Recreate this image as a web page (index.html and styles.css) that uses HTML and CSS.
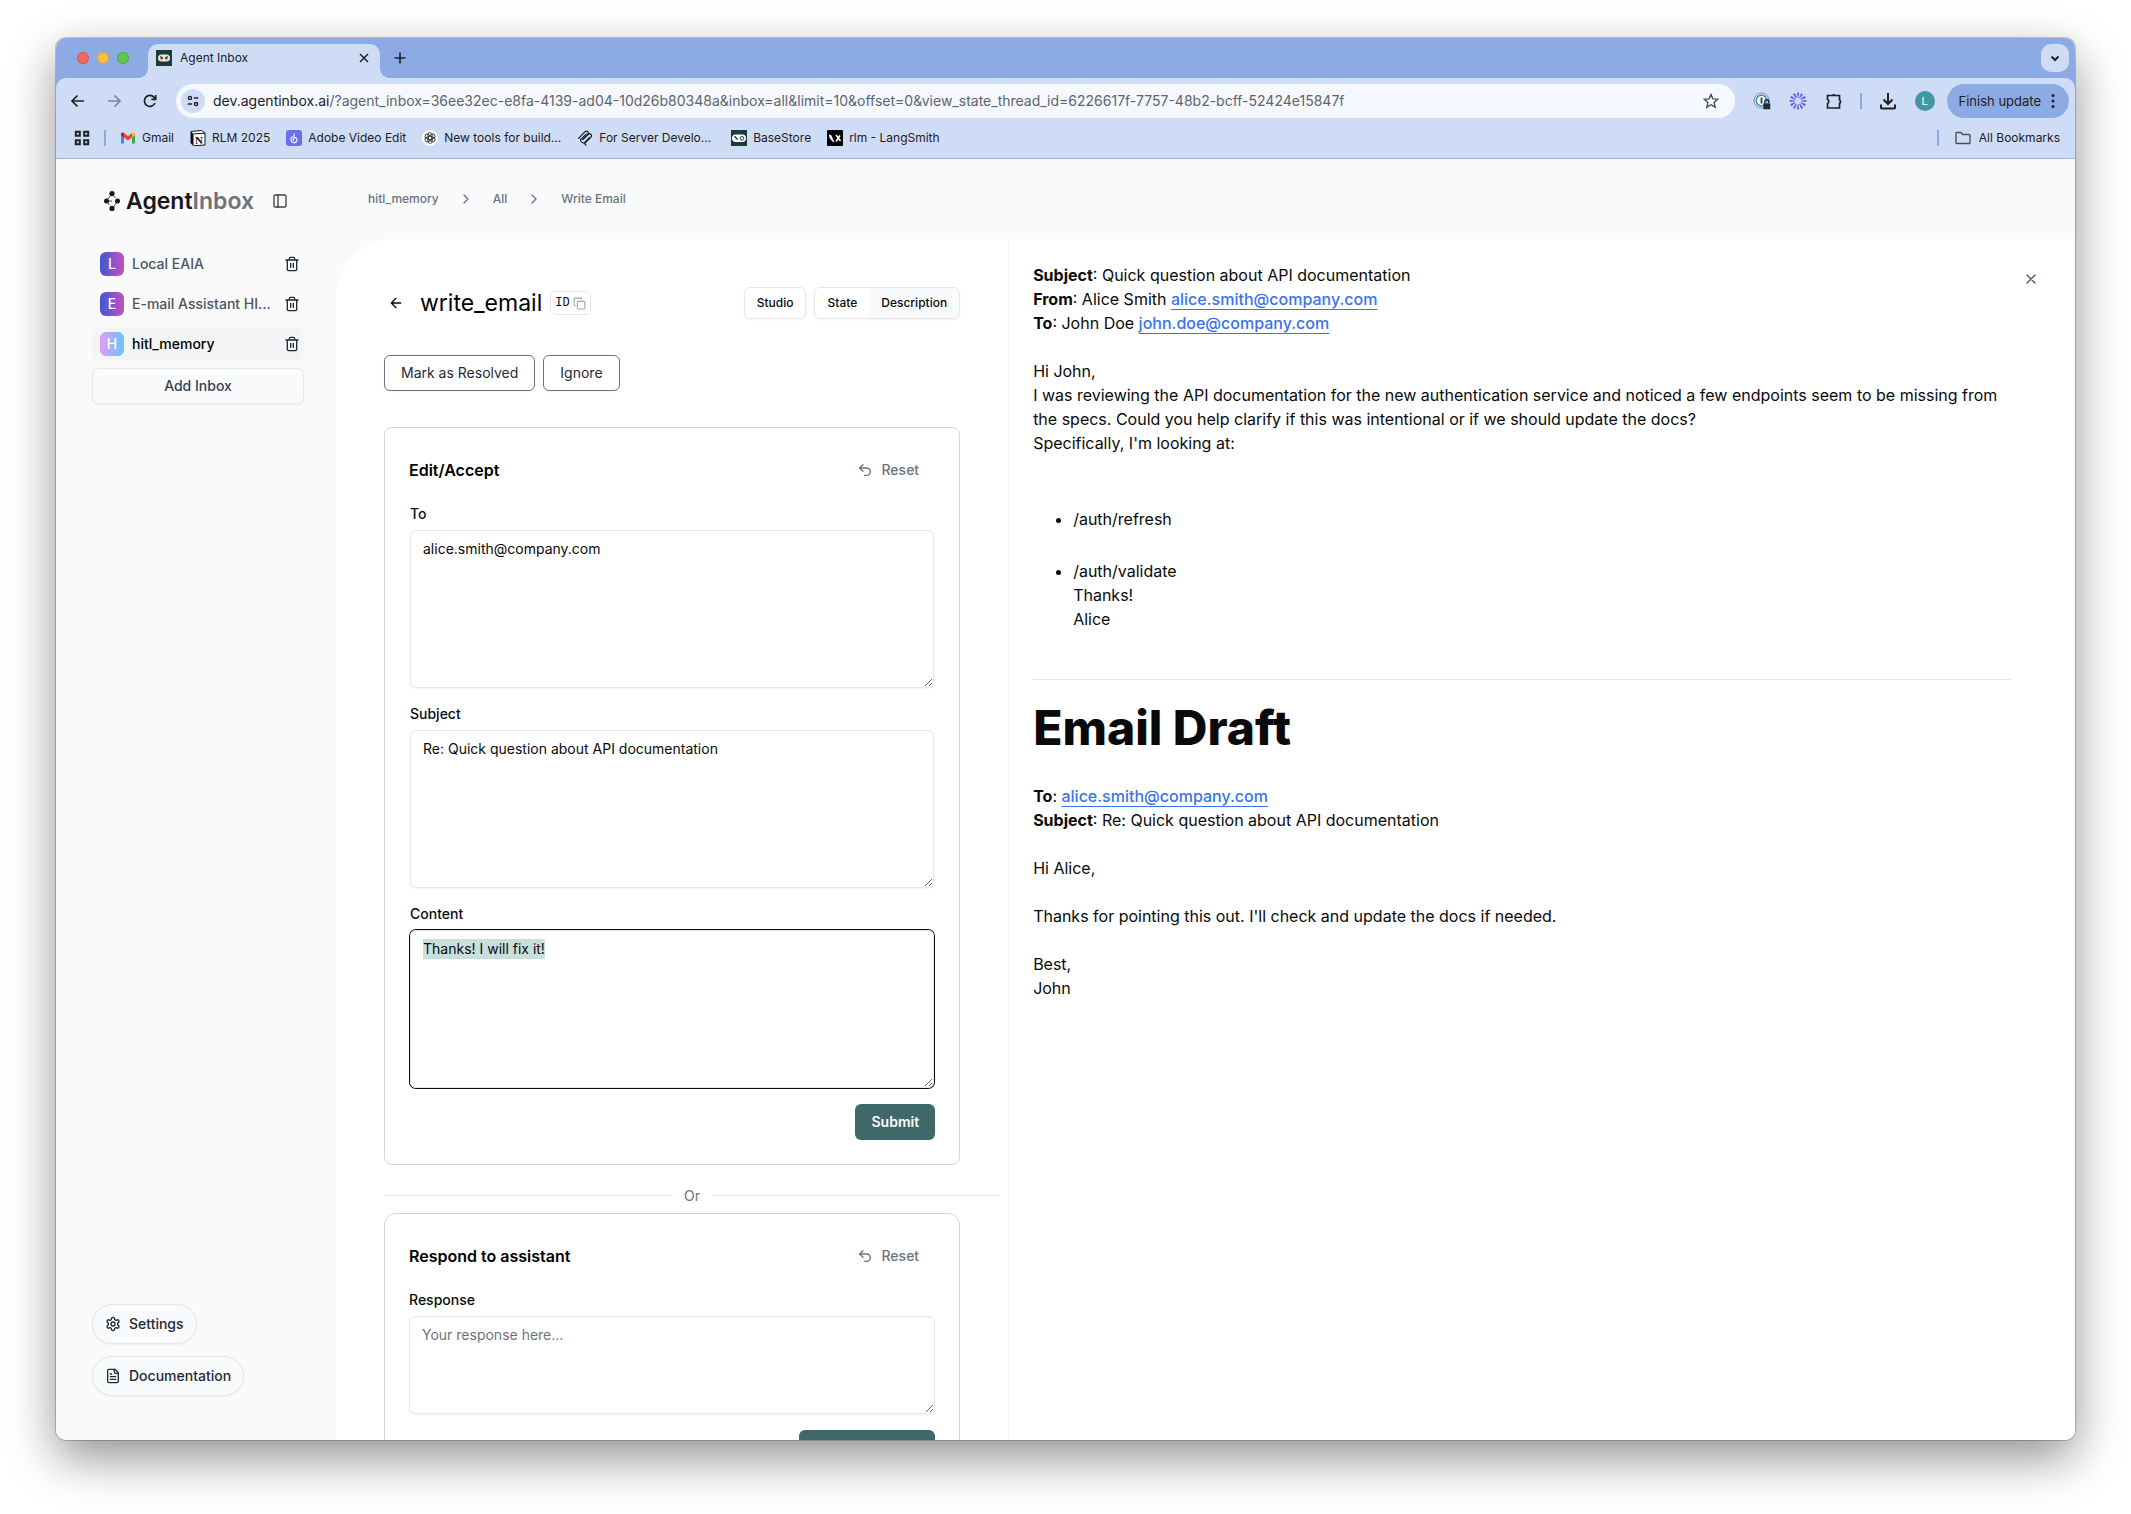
FILE: index.html
```html
<!DOCTYPE html>
<html lang="en">
<head>
<meta charset="utf-8">
<meta name="viewport" content="width=device-width, initial-scale=1">
<title>Agent Inbox</title>
<link rel="stylesheet" href="styles.css">
</head>
<body>
<svg class="defs" aria-hidden="true">
  <symbol id="trash" viewBox="0 0 24 24"><path d="M3 6h18M19 6v14c0 1-1 2-2 2H7c-1 0-2-1-2-2V6M8 6V4c0-1 1-2 2-2h4c1 0 2 1 2 2v2M10 11v6M14 11v6"/></symbol>
  <symbol id="chevron-right" viewBox="0 0 24 24"><path d="m9 18 6-6-6-6"/></symbol>
  <symbol id="undo" viewBox="0 0 24 24"><path d="M9 14 4 9l5-5"/><path d="M4 9h10.500a5.500 5.500 0 0 1 0 11H11"/></symbol>
  <symbol id="arrow-left" viewBox="0 0 24 24"><path d="m12 19-7-7 7-7M19 12H5"/></symbol>
  <symbol id="robot" viewBox="0 0 16 16"><rect width="16" height="16" fill="#1c3c3c"/><rect x="2" y="4.500" width="12" height="7" rx="3.500" fill="#f6e3d3"/><path d="M4.200 6.500 7 8.200M11.800 6.500 9 8.200" stroke="#1c3c3c" stroke-width="1.200"/><circle cx="5.500" cy="8.500" r="1" fill="#1c3c3c"/><circle cx="10.500" cy="8.500" r="1" fill="#1c3c3c"/></symbol>
</svg>

<div class="window">
  <header class="tabstrip">
    <div class="lights"><span class="light red"></span><span class="light amber"></span><span class="light green"></span></div>
    <div class="tab">
      <svg class="fav" aria-hidden="true"><use href="#robot"/></svg>
      <span class="tab-title">Agent Inbox</span>
      <button class="plain" aria-label="Close tab"><svg class="i16" viewBox="0 0 16 16"><path d="m4 4 8 8M12 4l-8 8"/></svg></button>
    </div>
    <button class="plain new-tab" aria-label="New tab"><svg class="i16" viewBox="0 0 16 16"><path d="M8 2.500v11M2.500 8h11"/></svg></button>
    <button class="tab-search" aria-label="Search tabs"><svg class="i16" viewBox="0 0 16 16"><path d="m4.500 6.500 3.500 3.500 3.500-3.500"/></svg></button>
  </header>

  <div class="chrome">
    <div class="toolbar">
      <div class="nav-buttons">
        <button class="plain" aria-label="Back"><svg class="i16" viewBox="0 0 16 16"><path d="M14 8H2.500M7.500 2.500 2 8l5.500 5.500"/></svg></button>
        <button class="plain dim" aria-label="Forward"><svg class="i16" viewBox="0 0 16 16"><path d="M2 8h11.500M8.500 2.500 14 8l-5.500 5.500"/></svg></button>
        <button class="plain" aria-label="Reload"><svg class="i16" viewBox="0 0 16 16"><path d="M13 10A5.500 5.500 0 1 1 12 4.200L13.500 6"/><path d="M13.700 2v4.300H9.400"/></svg></button>
      </div>
      <div class="omnibox">
        <button class="site-info" aria-label="Site information"><svg class="i16" viewBox="0 0 16 16"><circle cx="4.500" cy="4.500" r="1.800"/><path d="M9 4.500h5M2 11.500h5"/><circle cx="11.500" cy="11.500" r="1.800"/></svg></button>
        <div class="url" role="textbox" aria-label="Address" tabindex="0"><span class="host">dev.agentinbox.ai</span>/?agent_inbox=36ee32ec-e8fa-4139-ad04-10d26b80348a&amp;inbox=all&amp;limit=10&amp;offset=0&amp;view_state_thread_id=6226617f-7757-48b2-bcff-52424e15847f</div>
        <button class="plain star" aria-label="Bookmark"><svg class="i16" viewBox="0 0 16 16"><path d="m8 1.500 1.900 4.400 4.800.4-3.600 3.200 1.100 4.700L8 11.700l-4.200 2.500 1.100-4.700L1.300 6.300l4.800-.4z"/></svg></button>
      </div>
      <div class="extensions">
        <button class="plain" aria-label="Password manager"><svg class="i18" viewBox="0 0 18 18"><circle cx="8.500" cy="8.500" r="7.500" fill="#fff" stroke="#7d8591" stroke-width="1"/><circle cx="8.500" cy="8.500" r="5.400" stroke="#3d8bea" stroke-width="1.600"/><path d="M8.500 5.500v6" stroke="#33404f" stroke-width="1.800"/><rect x="10" y="11" width="7.500" height="6.500" rx="1" fill="#1f2937" stroke="#cfdcf6" stroke-width=".5"/><path d="M11.800 11V9.800a2 2 0 0 1 4 0V11" stroke="#1f2937" stroke-width="1.400"/></svg></button>
        <button class="plain" aria-label="Extension"><svg class="i18" viewBox="0 0 18 18"><circle cx="9" cy="9" r="5.800" pathLength="24" stroke="#6a5cf0" stroke-width="5.200" stroke-dasharray="1.100 .900" stroke-dashoffset=".550"/></svg></button>
        <button class="plain" aria-label="Extensions"><svg class="i18" viewBox="0 0 18 18"><path d="M2.500 3.500h12V8a2 2 0 0 1 0 3.500V16h-12v-4.500a2.200 2.200 0 0 0 0-4z" stroke-width="1.700"/><path d="M7 3.200a2 2 0 0 1 3.600 0zM15 7.800a2 2 0 0 1 0 3.600z" fill="#1f2024" stroke="none"/></svg></button>
        <span class="divider"></span>
        <button class="plain" aria-label="Downloads"><svg class="i18" viewBox="0 0 18 18"><path d="M9 1v10.500M4.500 7.500 9 12l4.500-4.500M2 12.500v3.200c0 .5.300.8.800.8h12.400c.5 0 .8-.3.800-.8v-3.200" stroke-width="2"/></svg></button>
        <button class="profile" aria-label="Profile">L</button>
      </div>
      <button class="update">Finish update<svg class="dots" viewBox="0 0 4 16" aria-hidden="true"><circle cx="2" cy="2.500" r="1.500"/><circle cx="2" cy="8" r="1.500"/><circle cx="2" cy="13.500" r="1.500"/></svg></button>
    </div>

    <nav class="bookmarks" aria-label="Bookmarks">
      <button class="plain" aria-label="Apps"><svg class="i16" viewBox="0 0 16 16"><path d="M1.800 1.800h4v4h-4zM10.200 1.800h4v4h-4zM1.800 10.200h4v4h-4zM10.200 10.200h4v4h-4z"/></svg></button>
      <span class="divider"></span>
      <a class="mark" href="#"><svg class="fav" viewBox="0 0 16 16"><path d="M1 13.500V4.200l3 2.300v7z" fill="#4285f4"/><path d="M15 13.500V4.200l-3 2.300v7z" fill="#34a853"/><path d="M1 4.500C1 2.500 3 2 4 3l4 3.200L12 3v4.300l-4 3.200-7-5.300z" fill="#ea4335"/><path d="M12 3c1-1 3-.5 3 1.500v.8l-3 2.400z" fill="#fbbc04"/><path d="M1 4.500C1 3.500 1.500 2.800 2.300 2.600L4 4v3.600L1 5.400z" fill="#c5221f"/></svg>Gmail</a>
      <a class="mark" href="#"><svg class="fav" viewBox="0 0 16 16"><path d="m1 1.500 10.500-1L15 3v12l-11.500.8L1 13z" fill="#fff" stroke="#111"/><path d="M1 1.500 3.500 4v11.500L1 13z" fill="#111"/><path d="M3.500 3.900 15 3.200" stroke="#111"/><text x="5" y="13.500" class="notion">N</text></svg>RLM 2025</a>
      <a class="mark" href="#"><svg class="fav" viewBox="0 0 16 16"><rect width="16" height="16" rx="3" fill="#6a6ff0"/><path d="M8 3.500c1 1.500-1 2.500 0 4M6.500 6.500C5 7.500 4.800 9 5 10c.3 1.800 1.600 2.800 3 2.800s3-1.200 3-3c0-2-2-2.800-3.500-1.500-1 1-.5 2.500.8 2.500" fill="none" stroke="#fff" stroke-width="1.100"/></svg>Adobe Video Edit</a>
      <a class="mark" href="#"><svg class="fav" viewBox="0 0 16 16"><circle cx="8" cy="8" r="8" fill="#fff"/><g fill="none" stroke="#444" stroke-width=".9"><rect x="5.800" y="2.600" width="4.400" height="7.200" rx="2.200"/><rect x="5.800" y="2.600" width="4.400" height="7.200" rx="2.200" transform="rotate(60 8 8)"/><rect x="5.800" y="2.600" width="4.400" height="7.200" rx="2.200" transform="rotate(120 8 8)"/><rect x="5.800" y="2.600" width="4.400" height="7.200" rx="2.200" transform="rotate(180 8 8)"/><rect x="5.800" y="2.600" width="4.400" height="7.200" rx="2.200" transform="rotate(240 8 8)"/><rect x="5.800" y="2.600" width="4.400" height="7.200" rx="2.200" transform="rotate(300 8 8)"/></g></svg>New tools for build...</a>
      <a class="mark" href="#"><svg class="fav" viewBox="0 0 16 16"><g fill="none" stroke="#16181d" stroke-width="1.200" stroke-linecap="round"><path d="m1.500 8.300 6.300-6.400c2.200-2 4.700.5 2.900 2.700L6 9.300"/><path d="m6.200 9.200 4.700-4.700c2.200-2 4.800.6 2.800 2.800l-5.500 5.500c-.6.600-.5 1 0 1.500l.8.900"/><path d="m3.500 9.800 5.600-5.600M4 11.500c-.8-1-.6-1.800 0-2.500M4.800 12.300c1.300 1.200 2.300.4 3 0l4.500-4.600"/></g></svg>For Server Develo...</a>
      <a class="mark mark-group" href="#"><svg class="fav" viewBox="0 0 16 16"><rect width="16" height="16" fill="#1c3c3c"/><rect x="1" y="4.500" width="14" height="7.500" rx="3.700" fill="#fff"/><path d="m3.500 6.300 3 3.300" stroke="#1c3c3c" stroke-width="1.500"/><circle cx="11" cy="8.300" r="1.800" fill="none" stroke="#1c3c3c"/></svg>BaseStore</a>
      <a class="mark" href="#"><svg class="fav" viewBox="0 0 16 16"><rect width="16" height="16" rx="1" fill="#000"/><path d="M2 5c2-1 3 1 3.500 3s1 2.500 2 3.500L6 12 2.500 8z" fill="#fff"/><path d="m9 5 4.500 6M13 5.500 9 11.500" stroke="#fff" stroke-width="1.600"/></svg>rlm - LangSmith</a>
      <span class="divider push"></span>
      <a class="mark mark-folder" href="#"><svg class="i16 folder" viewBox="0 0 16 16"><path d="M1 3.300c0-.5.300-.8.800-.8H6l1.700 2h6.500c.5 0 .8.300.8.800v7.400c0 .5-.3.800-.8.800H1.800c-.5 0-.8-.3-.8-.8z"/></svg>All Bookmarks</a>
    </nav>
  </div>

  <div class="app">
    <aside class="sidebar">
      <div class="brand">
        <svg class="logo" viewBox="0 0 16 20" aria-hidden="true"><circle cx="8" cy="2.600" r="2.600"/><circle cx="2.500" cy="10" r="2.500"/><circle cx="13.500" cy="10" r="2.500"/><circle cx="8" cy="17.400" r="2.600"/><path d="M6.500 4.500 3.500 8.500M9.500 4.500l2 2.500M4.500 10H8M4 12l1.500 2.200M12.500 12l-3 3.800" fill="none" stroke="#18181b" stroke-width=".8"/></svg>
        <span class="wordmark">Agent<span class="wordmark-light">Inbox</span></span>
        <button class="plain toggle" aria-label="Toggle sidebar"><svg class="lucide" viewBox="0 0 24 24"><rect x="3" y="3" width="18" height="18" rx="2"/><path d="M9 3v18"/></svg></button>
      </div>
      <ul class="inboxes">
        <li class="inbox"><a href="#"><span class="initial">L</span>Local EAIA</a><button class="plain" aria-label="Delete Local EAIA"><svg class="lucide"><use href="#trash"/></svg></button></li>
        <li class="inbox"><a href="#"><span class="initial">E</span>E-mail Assistant HI...</a><button class="plain" aria-label="Delete E-mail Assistant"><svg class="lucide"><use href="#trash"/></svg></button></li>
        <li class="inbox current"><a href="#" aria-current="page"><span class="initial sky">H</span>hitl_memory</a><button class="plain" aria-label="Delete hitl_memory"><svg class="lucide"><use href="#trash"/></svg></button></li>
      </ul>
      <button class="add">Add Inbox</button>
      <div class="footer-links">
        <button class="pill"><svg class="lucide" viewBox="0 0 24 24"><path d="M12.220 2h-.440a2 2 0 0 0-2 2v.180a2 2 0 0 1-1 1.730l-.430.250a2 2 0 0 1-2 0l-.150-.080a2 2 0 0 0-2.730.730l-.220.380a2 2 0 0 0 .730 2.730l.150.100a2 2 0 0 1 1 1.720v.510a2 2 0 0 1-1 1.740l-.150.090a2 2 0 0 0-.730 2.730l.220.380a2 2 0 0 0 2.730.730l.150-.080a2 2 0 0 1 2 0l.430.250a2 2 0 0 1 1 1.730V20a2 2 0 0 0 2 2h.440a2 2 0 0 0 2-2v-.180a2 2 0 0 1 1-1.730l.430-.250a2 2 0 0 1 2 0l.150.080a2 2 0 0 0 2.730-.730l.220-.390a2 2 0 0 0-.730-2.730l-.150-.080a2 2 0 0 1-1-1.740v-.500a2 2 0 0 1 1-1.740l.150-.090a2 2 0 0 0 .730-2.730l-.220-.380a2 2 0 0 0-2.730-.730l-.150.080a2 2 0 0 1-2 0l-.430-.250a2 2 0 0 1-1-1.730V4a2 2 0 0 0-2-2z"/><circle cx="12" cy="12" r="3"/></svg>Settings</button>
        <a class="pill" href="#"><svg class="lucide" viewBox="0 0 24 24"><path d="M15 2H6a2 2 0 0 0-2 2v16a2 2 0 0 0 2 2h12a2 2 0 0 0 2-2V7z"/><path d="M14 2v4a2 2 0 0 0 2 2h4M10 9H8M16 13H8M16 17H8"/></svg>Documentation</a>
      </div>
    </aside>

    <main class="main">
      <nav aria-label="Breadcrumb">
        <ol class="crumbs">
          <li><a href="#">hitl_memory</a></li>
          <li><svg class="lucide"><use href="#chevron-right"/></svg><a href="#">All</a></li>
          <li><svg class="lucide"><use href="#chevron-right"/></svg><a href="#">Write Email</a></li>
        </ol>
      </nav>

      <div class="panel">
        <section class="thread">
          <div class="thread-head">
            <button class="plain back" aria-label="Back to inbox"><svg class="lucide"><use href="#arrow-left"/></svg></button>
            <h1 class="title">write_email</h1>
            <button class="id">ID<svg class="lucide" viewBox="0 0 24 24"><rect x="8" y="8" width="14" height="14" rx="2"/><path d="M4 16c-1.100 0-2-.900-2-2V4c0-1.100.900-2 2-2h10c1.100 0 2 .900 2 2"/></svg></button>
            <button class="small studio">Studio</button>
            <div class="segment"><button class="seg">State</button><button class="seg on">Description</button></div>
          </div>
          <div class="actions">
            <button class="outline">Mark as Resolved</button>
            <button class="outline">Ignore</button>
          </div>

          <form class="card">
            <div class="card-head"><h2>Edit/Accept</h2><button type="reset" class="reset"><svg class="lucide"><use href="#undo"/></svg>Reset</button></div>
            <div class="field"><label for="to">To</label><textarea id="to">alice.smith@company.com</textarea></div>
            <div class="field"><label for="subject">Subject</label><textarea id="subject">Re: Quick question about API documentation</textarea></div>
            <div class="field"><label for="content">Content</label><textarea id="content">Thanks! I will fix it!</textarea></div>
            <button type="button" class="primary">Submit</button>
          </form>
          <div class="or">Or</div>
          <form class="card respond">
            <div class="card-head"><h2>Respond to assistant</h2><button type="reset" class="reset"><svg class="lucide"><use href="#undo"/></svg>Reset</button></div>
            <div class="field wide"><label for="response">Response</label><textarea id="response" class="short" placeholder="Your response here..."></textarea></div>
            <button type="button" class="primary send" aria-label="Send response"></button>
          </form>
        </section>

        <article class="description">
          <button class="plain close" aria-label="Close description"><svg class="lucide" viewBox="0 0 24 24"><path d="M18 6 6 18M6 6l12 12"/></svg></button>
          <p><strong>Subject</strong>: Quick question about API documentation<br><strong>From</strong>: Alice Smith <a href="#">alice.smith@company.com</a><br><strong>To</strong>: John Doe <a href="#">john.doe@company.com</a></p>
          <p>Hi John,<br>I was reviewing the API documentation for the new authentication service and noticed a few endpoints seem to be missing from the specs. Could you help clarify if this was intentional or if we should update the docs?<br>Specifically, I'm looking at:</p>
          <ul>
            <li>/auth/refresh</li>
            <li>/auth/validate<br>Thanks!<br>Alice</li>
          </ul>
          <hr>
          <h2 class="draft">Email Draft</h2>
          <p><strong>To</strong>: <a href="#">alice.smith@company.com</a><br><strong>Subject</strong>: Re: Quick question about API documentation</p>
          <p>Hi Alice,</p>
          <p>Thanks for pointing this out. I'll check and update the docs if needed.</p>
          <p>Best,<br>John</p>
        </article>
      </div>
    </main>
  </div>
</div>
<script src="script.js"></script>
</body>
</html>
```
FILE: script.js
```js
// Start with the draft body focused and selected, ready to be overwritten.
const content = document.getElementById('content');
content.focus({ preventScroll: true });
content.select();
```
FILE: styles.css
```css
* { box-sizing: border-box; }

body {
  margin: 0;
  height: 100vh;
  padding: 38px 56px 74px;
  overflow: hidden;
  background: #fff;
  color: #0a0a0a;
  font: 14px/20px Inter, "Liberation Sans", sans-serif;
}

button, textarea { font: inherit; color: inherit; margin: 0; }
button { cursor: pointer; padding: 0; white-space: nowrap; }
a { color: inherit; text-decoration: none; }
h1, h2, p, ul, ol { margin: 0; padding: 0; }
ul, ol { list-style: none; }
svg { flex: none; display: block; }
.defs { position: absolute; width: 0; height: 0; }

.plain { display: flex; align-items: center; justify-content: center; background: none; border: 0; }
.i16, .i18 { fill: none; stroke: #1f2024; stroke-width: 2; }
.i16 { width: 16px; height: 16px; }
.i18 { width: 18px; height: 18px; }
.fav { width: 16px; height: 16px; }
.lucide { width: 16px; height: 16px; fill: none; stroke: currentColor; stroke-width: 2; stroke-linecap: round; stroke-linejoin: round; }

/* Browser window */
.window {
  display: flex;
  flex-direction: column;
  height: 100%;
  overflow: hidden;
  border-radius: 10px;
  background: #fff;
  box-shadow: 0 0 0 1px rgba(0, 0, 0, .2), 0 18px 48px rgba(0, 0, 0, .43);
}
.tabstrip { flex: none; display: flex; height: 40px; padding-top: 6px; background: #8cabe4; }
.lights { display: flex; gap: 8px; padding: 8px 19px 0 21px; }
.light { width: 12px; height: 12px; border-radius: 50%; }
.red { background: #ec6a5e; box-shadow: inset 0 0 0 1px #d45a4f; }
.amber { background: #f4bf4f; box-shadow: inset 0 0 0 1px #dba53c; }
.green { background: #61c554; box-shadow: inset 0 0 0 1px #4dac42; }
.tab {
  position: relative;
  display: flex;
  align-items: center;
  gap: 8px;
  width: 232px;
  padding: 0 8px 6px;
  border-radius: 10px 10px 0 0;
  background: #cfdcf6;
  font-size: 12px;
  color: #1f2024;
}
.tab::before, .tab::after { content: ""; position: absolute; bottom: 0; width: 10px; height: 10px; }
.tab::before { right: 100%; background: radial-gradient(circle at 0 0, transparent 10px, #cfdcf6 10px); }
.tab::after { left: 100%; background: radial-gradient(circle at 100% 0, transparent 10px, #cfdcf6 10px); }
.tab-title { flex: 1; }
.tab svg { stroke-width: 1.500; }
.new-tab { width: 40px; height: 28px; }
.new-tab svg { stroke-width: 1.600; }
.tab-search {
  display: flex; align-items: center; justify-content: center;
  width: 28px; height: 28px; margin: 0 6px 0 auto;
  border: 0; border-radius: 10px; background: #cfdcf6;
}

.chrome { flex: none; background: linear-gradient(#8cabe4, #8cabe4) top / 100% 10px no-repeat; border-bottom: 1px solid #a3b4d3; color: #1f2024; font-size: 12px; }
.toolbar { display: flex; align-items: center; padding: 6px 6px 0 14px; border-radius: 10px 10px 0 0; background: #cfdcf6; }
.nav-buttons { display: flex; gap: 20px; padding-right: 18px; }
.nav-buttons svg { stroke-width: 1.700; }
.dim { opacity: .45; }
.omnibox { flex: 1; min-width: 0; display: flex; align-items: center; gap: 8px; height: 34px; padding: 0 16px 0 5px; border-radius: 17px; background: #f5f8fe; }
.site-info { display: flex; align-items: center; justify-content: center; width: 24px; height: 24px; border: 0; border-radius: 50%; background: #cfdcf6; }
.site-info svg { stroke-width: 1.600; width: 14px; height: 14px; }
.url { flex: 1; min-width: 0; overflow: hidden; white-space: nowrap; font-size: 14px; color: #60646b; }
.host { color: #1f2024; }
.star svg { stroke: #4b4f57; stroke-width: 1.400; }
.extensions { display: flex; align-items: center; gap: 18px; padding: 0 12px 0 18px; }
.divider { flex: none; width: 2px; height: 16px; background: #8cabe4; }
.extensions .divider { margin: 0 -1px; }
.profile { width: 20px; height: 20px; border: 0; border-radius: 50%; background: #4396a4; color: #fff; font-size: 11px; line-height: 20px; }
.update { display: flex; align-items: center; gap: 10px; height: 34px; padding: 0 14px 0 12px; border: 0; border-radius: 17px; background: #8cabe4; font-size: 13px; }
.dots { width: 4px; height: 16px; fill: #1f2024; }

.bookmarks { display: flex; align-items: center; height: 40px; padding: 0 15px 0 18px; background: #cfdcf6; }
.bookmarks .divider { margin: 0 14px; }
.bookmarks .divider.push { margin: 0 16px 0 auto; }
.mark { display: flex; align-items: center; gap: 6px; margin-right: 16px; white-space: nowrap; }
.mark-group { margin-left: 4px; }
.mark-folder { gap: 8px; margin-right: 0; }
.folder { stroke: #4b4f57; stroke-width: 1.400; }
.notion { font: bold 11px "Liberation Serif", serif; fill: #111; }

/* App shell */
.app { flex: 1; min-height: 0; display: flex; background: linear-gradient(90deg, #fafafa 256px, #f9fafb 280px); }
.sidebar { flex: none; display: flex; flex-direction: column; width: 256px; padding: 24px 8px 44px 36px; }
.brand { display: flex; align-items: center; gap: 6px; height: 36px; padding: 0 16px 0 12px; margin-bottom: 29px; }
.logo { width: 16px; height: 20px; fill: #18181b; }
.wordmark { font-size: 23px; line-height: 32px; font-weight: 600; color: #18181b; }
.wordmark-light { color: #71717a; }
.toggle { margin-left: auto; color: #3f3f46; }
.inboxes { display: flex; flex-direction: column; gap: 8px; }
.inbox { display: flex; align-items: center; height: 32px; padding: 0 4px 0 8px; border-radius: 6px; color: #1f2937; }
.inbox a { flex: 1; min-width: 0; display: flex; align-items: center; gap: 8px; white-space: nowrap; font-weight: 500; color: #4b5563; }
.inbox.current { background: #f3f4f6; }
.inbox.current a { color: #000; }
.initial { width: 24px; height: 24px; border-radius: 6px; background: linear-gradient(90deg, #4158d0, #c850c0); color: #fff; text-align: center; line-height: 24px; font-weight: 500; }
.initial.sky { background: linear-gradient(90deg, #e29bf7, #65c7f9); }
.add { height: 36px; margin-top: 8px; border: 1px solid #e5e7eb; border-radius: 6px; background: #f9fafb; box-shadow: 0 1px 2px rgba(0, 0, 0, .05); font-weight: 500; color: #374151; }
.footer-links { display: flex; flex-direction: column; align-items: flex-start; gap: 12px; margin-top: auto; }
.pill { display: flex; align-items: center; gap: 8px; height: 40px; padding: 0 12px; border: 1px solid #e5e7eb; border-radius: 20px; background: #f9fafb; box-shadow: 0 1px 2px rgba(0, 0, 0, .05); font-weight: 500; color: #1f2937; }

.main { flex: 1; min-width: 0; display: flex; flex-direction: column; padding-left: 24px; }
.crumbs { display: flex; align-items: center; gap: 19px; height: 80px; padding-left: 32px; font-size: 12px; font-weight: 500; color: #6b7280; }
.crumbs li { display: flex; align-items: center; gap: 19px; }
.panel { flex: 1; min-height: 0; display: grid; grid-template-columns: minmax(0, 63fr) minmax(0, 100fr); overflow: hidden; border-top-left-radius: 58px; background: #fff; }

/* Thread column */
.thread { padding: 48px 48px 0; }
.thread-head { display: flex; align-items: center; height: 32px; }
.back { width: 24px; height: 24px; margin-right: 12px; color: #0a0a0a; }
.title { margin-right: 8px; font-size: 23px; line-height: 32px; font-weight: 400; color: #000; }
.id { display: flex; align-items: center; gap: 3px; height: 24px; padding: 0 4px; border: 1px solid #e5e7eb; border-radius: 6px; background: #fff; font: 12px/16px "Liberation Mono", monospace; }
.id svg { width: 13px; height: 13px; color: #9ca3af; }
.small, .segment { height: 32px; border: 1px solid #e5e7eb; border-radius: 6px; background: #fff; box-shadow: 0 1px 2px rgba(0, 0, 0, .05); font-size: 12px; font-weight: 500; }
.studio { margin: 0 8px 0 auto; padding: 0 12px; }
.segment { display: flex; overflow: hidden; }
.seg { padding: 0 12px; border: 0; background: #fff; }
.seg.on { background: #f9fafb; }
.actions { display: flex; gap: 8px; margin: 36px 0; }
.outline { height: 36px; padding: 0 16px; border: 1px solid #6b7280; border-radius: 6px; background: #fff; box-shadow: 0 1px 2px rgba(0, 0, 0, .05); color: #1f2937; }

.card { display: flex; flex-direction: column; gap: 16px; padding: 24px; border: 1px solid #d1d5db; border-radius: 8px; background: #fff; }
.respond { border-radius: 12px; }
.card-head { display: flex; align-items: center; justify-content: space-between; height: 36px; }
.card-head h2 { font-size: 16px; line-height: 24px; font-weight: 600; color: #000; }
.reset { display: flex; align-items: center; gap: 8px; padding: 0 16px; border: 0; background: none; font-weight: 500; color: #6b7280; }
.field { display: flex; flex-direction: column; gap: 6px; padding: 0 1px; }
.field.wide { padding: 0; }
.field label { font-weight: 500; }
textarea { display: block; width: 100%; height: 158px; padding: 8px 12px; border: 1px solid #e5e7eb; border-radius: 6px; background: transparent; box-shadow: 0 1px 2px rgba(0, 0, 0, .05); resize: vertical; }
textarea.short { height: 98px; }
textarea::placeholder { color: #737373; }
textarea:focus { outline: 0; box-shadow: 0 0 0 1px #0a0a0a; }
textarea::selection { background: #c9dfdd; color: #0a0a0a; }
.primary { align-self: flex-end; height: 36px; padding: 0 16px; border: 0; border-radius: 6px; background: #3f6868; color: #fff; font-weight: 600; }
.send { width: 136px; }
.or { display: flex; align-items: center; gap: 12px; height: 48px; padding-top: 13px; margin-right: -40px; color: #6b7280; }
.or::before, .or::after { content: ""; flex: 1; height: 1px; background: #e5e7eb; }

/* Description column */
.description { position: relative; padding: 24px 64px 24px 24px; border-left: 1px solid #f1f2f4; font-size: 16px; line-height: 24px; }
.description p + p { margin-top: 24px; }
.description strong { font-weight: 700; }
.description a { color: #3973ee; font-weight: 500; text-decoration: underline 1px; text-underline-offset: 4px; text-decoration-skip-ink: none; }
.description ul { list-style: disc; padding-left: 40px; margin: 52px 0 48px; }
.description li + li { margin-top: 28px; }
.description hr { height: 1px; margin: 0 0 20px; border: 0; background: #e5e7eb; }
.close { position: absolute; top: 32px; right: 36px; color: #4b5563; }
.draft { margin-bottom: 28px; font-size: 48px; line-height: 56px; font-weight: 800; }
```
